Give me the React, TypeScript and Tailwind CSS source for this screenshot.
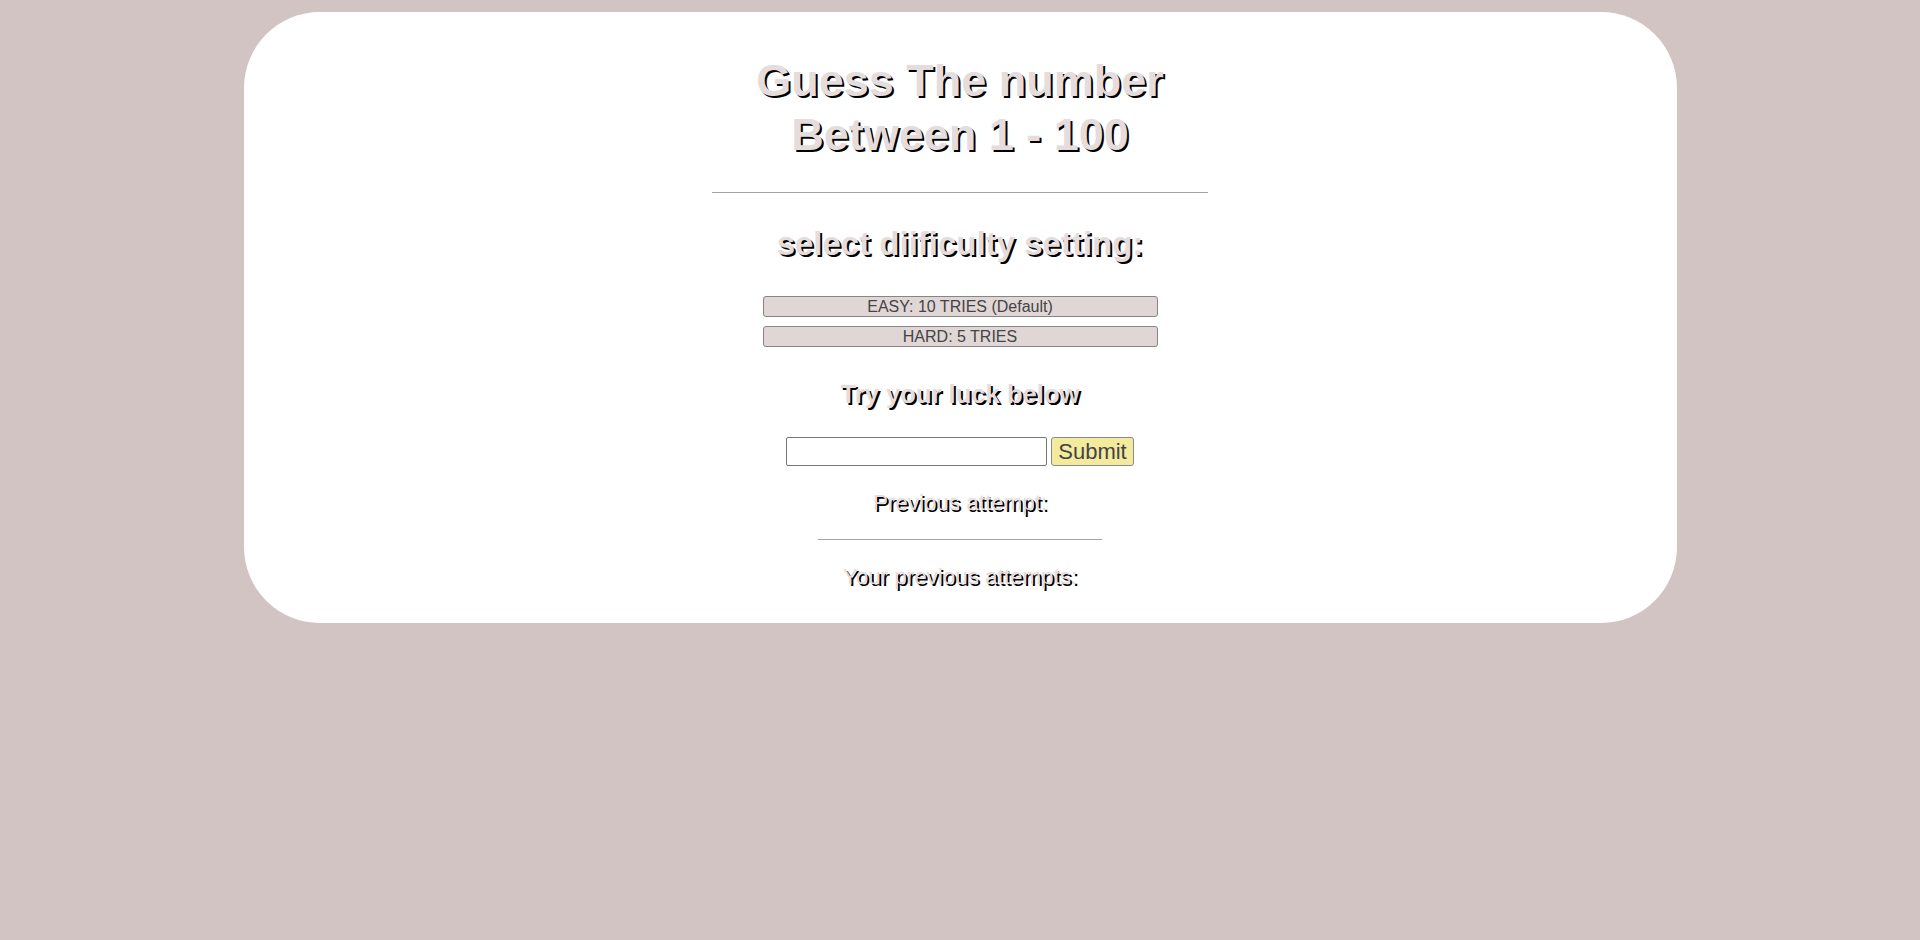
import { useState } from 'react'

const shadow = '[text-shadow:2px_2px_0px_#000]'

export default function App() {
  const [guess, setGuess] = useState('')
  const [tries, setTries] = useState(10)

  return (
    <div className="min-h-screen bg-[#d3c4c4] pt-[12px] font-['Liberation_Sans',Arial,sans-serif]">
      <div className="mx-auto w-[1433px] rounded-[76px] bg-white pt-[42px] pb-[33px] flex flex-col items-center text-center">
        <h1 className={`text-[45px] leading-[54px] font-bold text-[#e4dcdd] ${shadow}`}>
          Guess The number
          <br />
          Between 1 - 100
        </h1>

        <hr className="mt-[30px] w-[496px] border-0 border-t border-[#a3a3a3]" />

        <h2 className={`mt-[32px] text-[33px] leading-[38px] font-bold text-[#e4dcdd] ${shadow}`}>
          select diificulty setting:
        </h2>

        <div className="mt-[33px] flex flex-col gap-[9px]">
          <button
            onClick={() => setTries(10)}
            className="w-[395px] h-[21px] bg-[#e0d6d6] border border-[#858585] rounded-[3px] text-[16px] leading-[19px] text-[#444]"
          >
            EASY: 10 TRIES (Default)
          </button>
          <button
            onClick={() => setTries(5)}
            className="w-[395px] h-[21px] bg-[#e0d6d6] border border-[#858585] rounded-[3px] text-[16px] leading-[19px] text-[#444]"
          >
            HARD: 5 TRIES
          </button>
        </div>

        <h3 className={`mt-[32px] text-[25.6px] leading-[30px] font-bold text-[#e4dcdd] ${shadow}`}>
          Try your luck below
        </h3>

        <div className="mt-[28px] flex items-center gap-[4px]" data-tries={tries}>
          <input
            value={guess}
            onChange={(e) => setGuess(e.target.value)}
            className="w-[261px] h-[29px] border border-[#767676] rounded-[2px] bg-white px-1 outline-none"
          />
          <button className="w-[83px] h-[29px] bg-[#f3ea9e] border border-[#8a8a8a] rounded-[3px] text-[22px] leading-[25px] text-[#444]">
            Submit
          </button>
        </div>

        <p className={`mt-[24px] text-[22.4px] leading-[26px] text-[#e4dcdd] ${shadow}`}>
          Previous attempt:
        </p>

        <hr className="mt-[23px] w-[284px] border-0 border-t border-[#a3a3a3]" />

        <p className={`mt-[24px] text-[22.4px] leading-[26px] text-[#e4dcdd] ${shadow}`}>
          Your previous attempts:
        </p>
      </div>
    </div>
  )
}
